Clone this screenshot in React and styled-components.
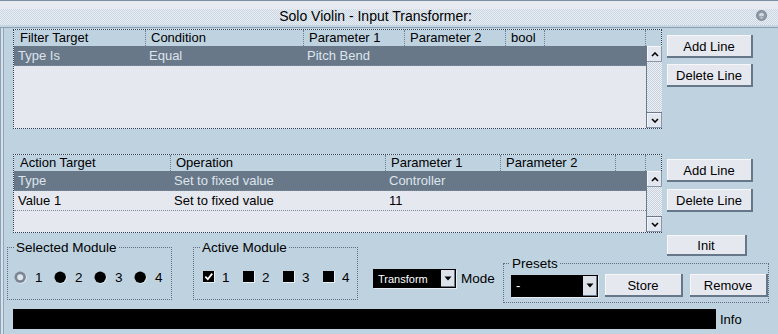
import React from 'react';
import styled, { createGlobalStyle } from 'styled-components';

const GlobalStyle = createGlobalStyle`
  html, body { margin: 0; padding: 0; background: #bed2e0; }
  body { font-family: "Liberation Sans", Arial, sans-serif; font-size: 13px; color: #000; }
  * { box-sizing: border-box; }
`;

const Window = styled.div`
  width: 778px;
  height: 334px;
  display: flex;
  flex-direction: column;
  background: #bed2e0;
  overflow: hidden;
`;

const TitleBar = styled.div`
  position: relative;
  height: 28px;
  flex: none;
  display: flex;
  align-items: center;
  justify-content: center;
  padding: 3px 27px 0 0;
  border-top: 1px solid #7d8ea4;
  border-bottom: 1px solid #8ea0b3;
  background:
    linear-gradient(#e8eaf2 0 8px, transparent 8px, transparent 24px, #c4d6e2 24px),
    repeating-conic-gradient(#c9d7e3 0 25%, #e9edf3 0 50%) 0 0 / 2px 2px;
  font-size: 14px;
`;

const TitleIcon = styled.svg`
  position: absolute;
  right: 11px;
  top: 9px;
`;

const Body = styled.div`
  flex: 1;
  display: flex;
  flex-direction: column;
  padding: 1px 9px 0 7px;
  box-shadow: inset 1px 0 #8fa1b4, inset 3px 0 #d4e0ea, inset 4px 0 #93a5b8;
`;

const Section = styled.div`
  display: flex;
  align-items: flex-start;
  margin: ${p => p.$mt}px 0 0 6px;
`;

const TableFrame = styled.div`
  width: 649px;
  height: ${p => p.$h}px;
  flex: none;
  border: 1px dotted #2f3f52;
  background: #e6e8f0;
  display: flex;
  flex-direction: column;
`;

const HeaderRow = styled.div`
  display: flex;
  height: 16px;
  flex: none;
  background: #bed2e0;
`;

const HeaderCell = styled.div`
  width: ${p => p.$w}px;
  flex: none;
  padding-left: ${p => p.$pl}px;
  border-right: 1px dotted #6f8093;
  line-height: 16px;
  white-space: nowrap;
  overflow: hidden;
`;

const HeaderFill = styled.div`
  flex: 1;
`;

const TableBody = styled.div`
  flex: 1;
  display: flex;
  min-height: 0;
`;

const RowList = styled.div`
  flex: 1;
  display: flex;
  flex-direction: column;
`;

const Row = styled.div`
  display: flex;
  height: 20px;
  flex: none;
  border-bottom: 1px dotted #7a8b9c;
  background: ${p => (p.$sel ? '#687889' : 'transparent')};
  color: ${p => (p.$sel ? '#dde4ec' : '#000')};
`;

const Cell = styled.div`
  width: ${p => p.$w}px;
  flex: none;
  padding-left: ${p => p.$pl}px;
  line-height: 19px;
  white-space: nowrap;
  overflow: hidden;
`;

const ScrollBar = styled.div`
  width: 16px;
  flex: none;
  display: flex;
  flex-direction: column;
  border-left: 1px solid #6a7a8c;
`;

const ScrollButton = styled.div`
  height: 16px;
  flex: none;
  display: flex;
  align-items: center;
  justify-content: center;
  background: #e2e6ee;
  box-shadow: inset -1px -1px #8898aa, inset 1px 1px #f4f6f9;
  border-top: ${p => (p.$down ? '1px solid #6a7a8c' : 'none')};
`;

const ScrollTrack = styled.div`
  flex: 1;
  background: repeating-conic-gradient(#c6d0dc 0 25%, #eef1f5 0 50%) 0 0 / 2px 2px;
`;

const ButtonStack = styled.div`
  display: flex;
  flex-direction: column;
  gap: ${p => p.$gap}px;
  padding-top: ${p => p.$pt}px;
  margin-left: 5px;
`;

const Button = styled.button`
  width: ${p => p.$w}px;
  height: ${p => p.$h}px;
  flex: none;
  margin: 0;
  padding: 1px 0 0;
  display: flex;
  align-items: center;
  justify-content: center;
  font: 13px "Liberation Sans", Arial, sans-serif;
  color: #000;
  background: #e6e8f0;
  border: none;
  border-right: 2px solid #66778a;
  border-bottom: 2px solid #66778a;
  box-shadow: inset 1px 1px #f7f7fa;
`;

const Controls = styled.div`
  display: flex;
  align-items: flex-start;
`;

const Group = styled.fieldset`
  width: ${p => p.$w}px;
  margin: ${p => p.$mt}px 0 0 ${p => p.$ml}px;
  padding: ${p => p.$pad};
  border: 1px dotted #5f7085;
  min-width: 0;
`;

const Legend = styled.legend`
  padding: 0 2px;
  font-size: 13.5px;
  line-height: 15px;
`;

const OptionRow = styled.div`
  display: flex;
  align-items: center;
  height: 15px;
  padding-left: ${p => p.$pl}px;
`;

const Option = styled.div`
  width: 40px;
  flex: none;
  display: flex;
  align-items: center;
  gap: ${p => p.$gap}px;
  font-size: 13.5px;
`;

const ModeWrap = styled.div`
  display: flex;
  align-items: center;
  margin: 36px 0 0 15px;
  gap: 5px;
  font-size: 13.5px;
`;

const SelectBox = styled.div`
  width: ${p => p.$w}px;
  height: ${p => p.$h}px;
  flex: none;
  display: flex;
  padding: 1px;
  background: #000;
  color: #fff;
  box-shadow: 1px 1px #e8eef4;
`;

const SelectValue = styled.div`
  flex: 1;
  padding-left: 4px;
  font-size: ${p => p.$fs}px;
  display: flex;
  align-items: center;
`;

const SelectArrow = styled.div`
  width: 14px;
  flex: none;
  display: flex;
  align-items: center;
  justify-content: center;
  background: #dde2ea;
  border-right: 1px solid #6a7a8c;
  border-bottom: 1px solid #6a7a8c;
`;

const RightColumn = styled.div`
  margin-left: auto;
  display: flex;
  flex-direction: column;
  align-items: flex-start;
`;

const InitButton = styled(Button)`
  margin: 2px 0 0 164px;
`;

const PresetRow = styled.div`
  display: flex;
  align-items: center;
  padding-left: 1px;
  gap: 7px;
`;

const InfoRow = styled.div`
  display: flex;
  align-items: center;
  margin: 6px 0 0 6px;
  gap: 4px;
`;

const InfoBar = styled.div`
  width: 703px;
  height: 20px;
  background: #000;
`;

const Chevron = ({ down }) => (
  <svg width="8" height="5" viewBox="0 0 8 5">
    <path
      d={down ? 'M1 1 L4 4 L7 1' : 'M1 4 L4 1 L7 4'}
      fill="none"
      stroke="#000"
      strokeWidth="1.6"
    />
  </svg>
);

const Triangle = () => (
  <svg width="8" height="5" viewBox="0 0 8 5">
    <path d="M0.5 0.5 L7.5 0.5 L4 4.5 Z" fill="#000" />
  </svg>
);

const Radio = ({ on }) => (
  <svg width="13" height="13" viewBox="0 0 13 13">
    <circle cx="6.8" cy="6.8" r="5.9" fill="#e6eef6" />
    {on ? (
      <>
        <circle cx="6.2" cy="6.2" r="5.7" fill="#7b8593" />
        <circle cx="6.2" cy="6.2" r="3" fill="#dfe5ec" />
      </>
    ) : (
      <circle cx="6.2" cy="6.2" r="5.7" fill="#000" />
    )}
  </svg>
);

const Check = ({ on }) => (
  <svg width="12" height="12" viewBox="0 0 12 12">
    <rect x="0" y="0" width="12" height="12" fill="#e6eef6" />
    <rect x="0" y="0" width="11" height="11" fill="#000" />
    {on && <path d="M2.3 5.6 L4.8 8.2 L9.2 2.6" fill="none" stroke="#fff" strokeWidth="1.8" />}
  </svg>
);

const Table = ({ columns, rows, height }) => (
  <TableFrame $h={height}>
    <HeaderRow>
      {columns.map((c, i) => (
        <HeaderCell key={i} $w={c.w} $pl={i === 0 ? 6 : 5}>
          {c.label}
        </HeaderCell>
      ))}
      <HeaderFill />
    </HeaderRow>
    <TableBody>
      <RowList>
        {rows.map((r, ri) => (
          <Row key={ri} $sel={r.sel}>
            {r.cells.map((t, ci) => (
              <Cell key={ci} $w={columns[ci].w} $pl={ci === 0 ? 4 : 3}>
                {t}
              </Cell>
            ))}
          </Row>
        ))}
      </RowList>
      <ScrollBar>
        <ScrollButton>
          <Chevron />
        </ScrollButton>
        <ScrollTrack />
        <ScrollButton $down>
          <Chevron down />
        </ScrollButton>
      </ScrollBar>
    </TableBody>
  </TableFrame>
);

const filterCols = [
  { label: 'Filter Target', w: 132 },
  { label: 'Condition', w: 158 },
  { label: 'Parameter 1', w: 101 },
  { label: 'Parameter 2', w: 101 },
  { label: 'bool', w: 39 },
  { label: '', w: 101 },
];

const actionCols = [
  { label: 'Action Target', w: 157 },
  { label: 'Operation', w: 215 },
  { label: 'Parameter 1', w: 115 },
  { label: 'Parameter 2', w: 115 },
  { label: '', w: 30 },
];

export default function App() {
  return (
    <>
      <GlobalStyle />
      <Window>
        <TitleBar>
          Solo Violin - Input Transformer:
          <TitleIcon width="11" height="11" viewBox="0 0 11 11">
            <circle cx="5.5" cy="5.5" r="5" fill="#8f9aa8" stroke="#6f7b8a" strokeWidth="0.8" />
            <path d="M3 4.2 Q5.5 2 8 4.2 L7.4 6.4 Q5.5 5 3.6 6.4 Z" fill="#d6dce4" />
            <circle cx="5.5" cy="7.6" r="1.2" fill="#c3cad4" />
          </TitleIcon>
        </TitleBar>
        <Body>
          <Section $mt={0}>
            <Table
              columns={filterCols}
              height={100}
              rows={[{ sel: true, cells: ['Type Is', 'Equal', 'Pitch Bend', '', '', ''] }]}
            />
            <ButtonStack $pt={6} $gap={6}>
              <Button $w={86} $h={23}>Add Line</Button>
              <Button $w={86} $h={23}>Delete Line</Button>
            </ButtonStack>
          </Section>
          <Section $mt={25}>
            <Table
              columns={actionCols}
              height={79}
              rows={[
                { sel: true, cells: ['Type', 'Set to fixed value', 'Controller', '', ''] },
                { sel: false, cells: ['Value 1', 'Set to fixed value', '11', '', ''] },
              ]}
            />
            <ButtonStack $pt={5} $gap={7}>
              <Button $w={86} $h={23}>Add Line</Button>
              <Button $w={86} $h={23}>Delete Line</Button>
            </ButtonStack>
          </Section>
          <Controls>
            <Group $w={165} $mt={6.5} $ml={0} $pad="15px 6px 14px">
              <Legend>Selected Module</Legend>
              <OptionRow $pl={0}>
                {[1, 2, 3, 4].map(n => (
                  <Option key={n} $gap={8}>
                    <Radio on={n === 1} />
                    {n}
                  </Option>
                ))}
              </OptionRow>
            </Group>
            <Group $w={165} $mt={6.5} $ml={21} $pad="15px 6px 14px">
              <Legend>Active Module</Legend>
              <OptionRow $pl={3}>
                {[1, 2, 3, 4].map(n => (
                  <Option key={n} $gap={7}>
                    <Check on={n === 1} />
                    {n}
                  </Option>
                ))}
              </OptionRow>
            </Group>
            <ModeWrap>
              <SelectBox $w={83} $h={19}>
                <SelectValue $fs={11}>Transform</SelectValue>
                <SelectArrow>
                  <Triangle />
                </SelectArrow>
              </SelectBox>
              Mode
            </ModeWrap>
            <RightColumn>
              <InitButton $w={80} $h={21}>Init</InitButton>
              <Group $w={266} $mt={0} $ml={0} $pad="3px 6px 5px">
                <Legend>Presets</Legend>
                <PresetRow>
                  <SelectBox $w={87} $h={22}>
                    <SelectValue $fs={13}>-</SelectValue>
                    <SelectArrow>
                      <Triangle />
                    </SelectArrow>
                  </SelectBox>
                  <Button $w={78} $h={23}>Store</Button>
                  <Button $w={78} $h={23}>Remove</Button>
                </PresetRow>
              </Group>
            </RightColumn>
          </Controls>
          <InfoRow>
            <InfoBar />
            Info
          </InfoRow>
        </Body>
      </Window>
    </>
  );
}
